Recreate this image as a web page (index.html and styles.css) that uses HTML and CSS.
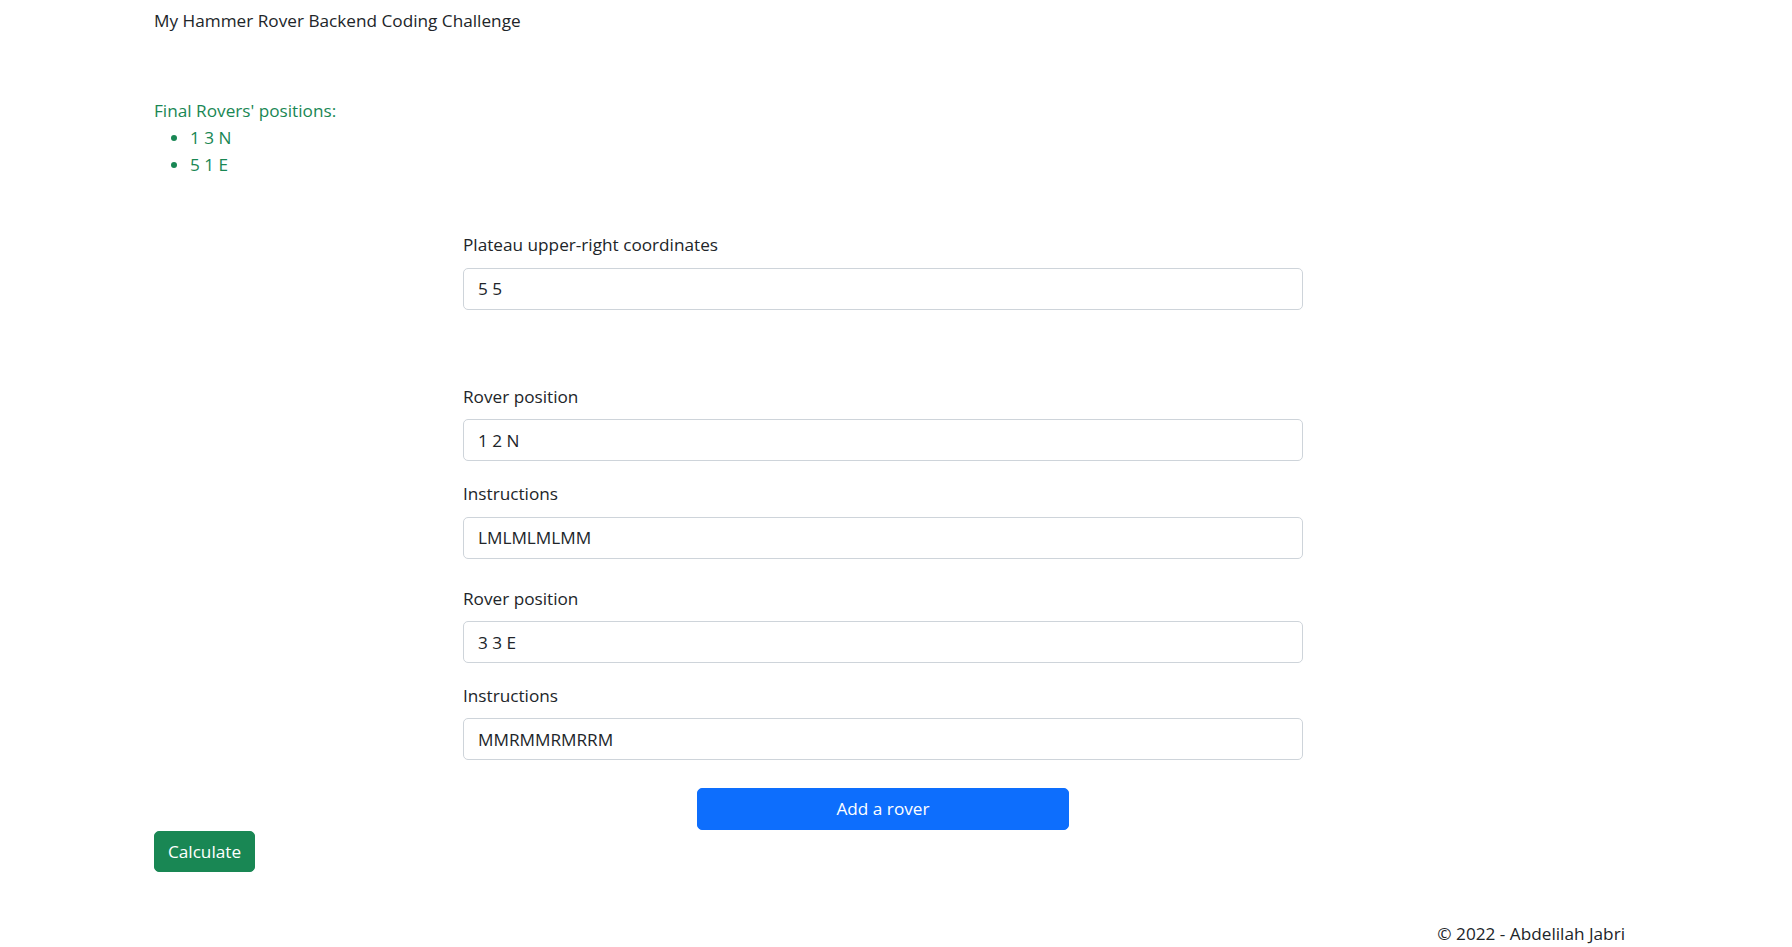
FILE: index.html
```html
<!DOCTYPE html>
<html lang="en">
<head>
<meta charset="utf-8">
<title>My Hammer Rover Backend Coding Challenge</title>
<link rel="stylesheet" href="styles.css">
</head>
<body>
<header class="topbar">
  <span class="brand">My Hammer Rover Backend Coding Challenge</span>
</header>
<main class="page">
  <section class="results">
    <div class="results-title">Final Rovers' positions:</div>
    <ul class="results-list">
      <li>1 3 N</li>
      <li>5 1 E</li>
    </ul>
  </section>

  <form class="rover-form">
    <div class="field plateau">
      <label class="field-label">Plateau upper-right coordinates</label>
      <input class="field-input" type="text" value="5 5">
    </div>

    <div class="rover first">
      <div class="field">
        <label class="field-label">Rover position</label>
        <input class="field-input" type="text" value="1 2 N">
      </div>
      <div class="field">
        <label class="field-label">Instructions</label>
        <input class="field-input" type="text" value="LMLMLMLMM">
      </div>
    </div>

    <div class="rover second">
      <div class="field">
        <label class="field-label">Rover position</label>
        <input class="field-input" type="text" value="3 3 E">
      </div>
      <div class="field">
        <label class="field-label">Instructions</label>
        <input class="field-input" type="text" value="MMRMMRMRRM">
      </div>
    </div>

    <div class="add-row">
      <button type="button" class="btn btn-primary add-btn">Add a rover</button>
    </div>
  </form>

  <div class="calc-row">
    <button type="button" class="btn btn-success">Calculate</button>
  </div>
</main>
<footer class="footer">
  <span>&copy; 2022 - Abdelilah Jabri</span>
</footer>
</body>
</html>
```

FILE: styles.css
```css
* { box-sizing: border-box; }

html, body {
  margin: 0;
  padding: 0;
  background: #fff;
}

body {
  font-family: "Open Sans", "Noto Sans", sans-serif;
  font-size: 17.2px;
  line-height: 26.4px;
  color: #212529;
  width: 1792px;
  height: 947px;
  overflow: hidden;
}

.topbar {
  padding: 8px 0 0 154px;
  height: 34px;
}

.page {
  padding-left: 154px;
}

.results {
  margin-top: 64px;
  color: #198754;
}

.results-list {
  margin: 0;
  padding-left: 36px;
}

.results-list li {
  line-height: 27px;
}

.results-list li::marker {
  font-size: 17px;
}

.rover-form {
  margin-left: 309px;
  width: 840px;
  margin-top: 54px;
}

.field {
  display: flex;
  flex-direction: column;
}

.field-label {
  display: block;
  margin-bottom: 9px;
}

.field-input {
  height: 42px;
  width: 100%;
  border: 1px solid #ced4da;
  border-radius: 5px;
  padding: 0 14px;
  font: inherit;
  color: #212529;
  background: #fff;
}

.rover {
  display: flex;
  flex-direction: column;
  gap: 20px;
}

.rover.first {
  margin-top: 74px;
}

.rover.second {
  margin-top: 27px;
}

.add-row {
  display: flex;
  justify-content: center;
  margin-top: 28px;
}

.btn {
  font: inherit;
  border: 1px solid transparent;
  border-radius: 5px;
  color: #fff;
  height: 42px;
  padding: 0 14px;
  cursor: pointer;
}

.btn-primary {
  background: #0d6efd;
  border-color: #0d6efd;
}

.add-btn {
  width: 372px;
}

.btn-success {
  background: #198754;
  border-color: #198754;
  height: 41px;
  width: 101px;
  padding: 0;
}

.calc-row {
  margin-top: 1px;
}

.footer {
  margin-top: 49px;
  display: flex;
  justify-content: flex-end;
  padding-right: 167px;
}
```
